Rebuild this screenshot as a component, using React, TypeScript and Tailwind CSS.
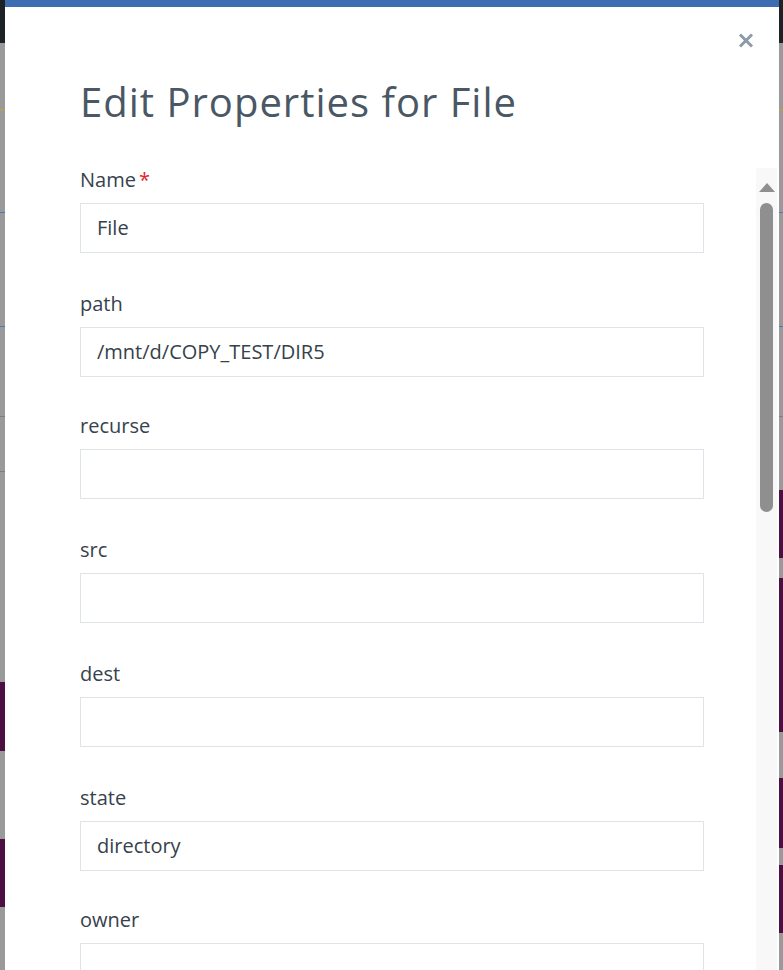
const fields = [
  { label: 'Name', value: 'File', required: true, gap: 37 },
  { label: 'path', value: '/mnt/d/COPY_TEST/DIR5', gap: 35 },
  { label: 'recurse', value: '', gap: 37 },
  { label: 'src', value: '', gap: 37 },
  { label: 'dest', value: '', gap: 37 },
  { label: 'state', value: 'directory', gap: 35 },
  { label: 'owner', value: '', gap: 37 },
]

const LeftStrip = () => (
  <div className="flex flex-col w-[5px] shrink-0 bg-[#9a9a9a]">
    <div className="h-[43px] bg-[#1d2227]" />
    <div className="h-[66px]" />
    <div className="h-[1px] bg-[#c9a227]" />
    <div className="h-[102px]" />
    <div className="h-[1px] bg-[#4a78b8]" />
    <div className="h-[113px]" />
    <div className="h-[1px] bg-[#4a78b8]" />
    <div className="h-[89px]" />
    <div className="h-[1px] bg-[#7d7d7d]" />
    <div className="h-[54px]" />
    <div className="h-[1px] bg-[#7d7d7d]" />
    <div className="h-[210px]" />
    <div className="h-[69px] bg-[#4b0f44]" />
    <div className="h-[88px]" />
    <div className="h-[68px] bg-[#4b0f44]" />
  </div>
)

const RightStrip = () => (
  <div className="flex flex-col w-[4px] shrink-0 bg-[#9a9a9a]">
    <div className="h-[43px] bg-[#1d2227]" />
    <div className="h-[66px]" />
    <div className="h-[1px] bg-[#c9a227]" />
    <div className="h-[102px]" />
    <div className="h-[1px] bg-[#4a78b8]" />
    <div className="h-[113px]" />
    <div className="h-[1px] bg-[#4a78b8]" />
    <div className="h-[89px]" />
    <div className="h-[1px] bg-[#7d7d7d]" />
    <div className="h-[73px]" />
    <div className="h-[68px] bg-[#4b0f44]" />
    <div className="h-[20px]" />
    <div className="h-[154px] bg-[#4b0f44]" />
    <div className="h-[46px]" />
    <div className="h-[70px] bg-[#4b0f44]" />
    <div className="h-[17px]" />
    <div className="h-[68px] bg-[#4b0f44]" />
  </div>
)

interface FieldProps {
  label: string
  value: string
  required?: boolean
  gap: number
}

const Field = ({ label, value, required, gap }: FieldProps) => (
  <div className="flex flex-col" style={{ marginBottom: gap }}>
    <label className="leading-[28px] text-[20px] text-[#36424d]">
      {label}
      {required && <span className="text-[#e0262b] ml-[3px]">*</span>}
    </label>
    <div className="mt-[9px] h-[50px] w-[624px] border border-[#dfe4e8] bg-white pl-[16px] flex items-center text-[20px] text-[#36414b]">
      {value}
    </div>
  </div>
)

export default function App() {
  return (
    <div className="flex w-[783px] h-[970px] overflow-hidden bg-[#9a9a9a] font-['Open_Sans','Noto_Sans',sans-serif]">
      <LeftStrip />
      <div className="flex flex-col w-[774px] h-full bg-white border-t-[7px] border-[#3e6db4]">
        <div className="flex justify-end pt-[26px] pr-[25px] h-[71px]">
          <svg width="16" height="15" viewBox="0 0 16 15">
            <path d="M2 1.5 L14 13.5 M14 1.5 L2 13.5" stroke="#8c9ba7" strokeWidth="3" strokeLinecap="butt" />
          </svg>
        </div>
        <h1 className="pl-[75px] h-[88px] text-[40px] leading-[48px] font-normal tracking-[1px] text-[#4a5765]">
          Edit Properties for File
        </h1>
        <div className="flex flex-1 min-h-0">
          <div className="flex flex-col pl-[75px] w-[751px] overflow-hidden">
            {fields.map((f) => (
              <Field key={f.label} label={f.label} value={f.value} required={f.required} gap={f.gap} />
            ))}
          </div>
          <div className="flex flex-col items-center w-[21px] mt-[2px] bg-[#f8f8f8]">
            <div className="mt-[15px] w-0 h-0 border-l-[8px] border-r-[8px] border-b-[9px] border-l-transparent border-r-transparent border-b-[#8f8f8f]" />
            <div className="mt-[11px] w-[13px] h-[309px] rounded-full bg-[#8f8f8f]" />
          </div>
        </div>
      </div>
      <RightStrip />
    </div>
  )
}
